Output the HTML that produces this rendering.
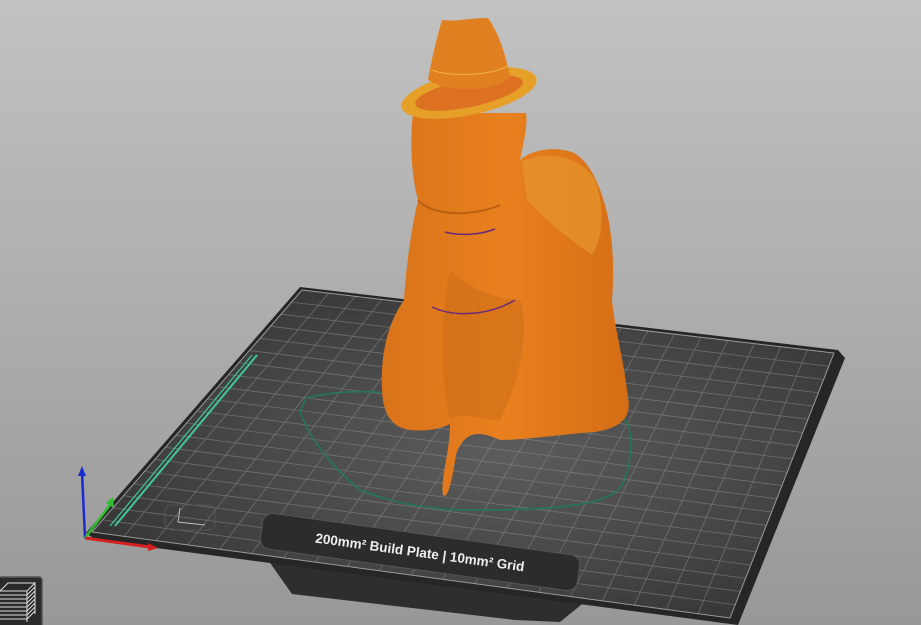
<!DOCTYPE html>
<html><head><meta charset="utf-8"><style>
html,body{margin:0;padding:0;width:921px;height:625px;overflow:hidden;background:#a9a9a9}
svg{display:block}
</style></head><body>
<svg id="s" width="921" height="625" viewBox="0 0 921 625" xmlns="http://www.w3.org/2000/svg">
<defs>
<linearGradient id="bg" x1="0" y1="0" x2="0" y2="1">
<stop offset="0" stop-color="#c2c2c2"/><stop offset="0.5" stop-color="#adadad"/><stop offset="1" stop-color="#989898"/></linearGradient>
<radialGradient id="pl" cx="0.55" cy="0.5" r="0.6">
<stop offset="0" stop-color="#5c5c5c"/><stop offset="0.6" stop-color="#464646"/><stop offset="1" stop-color="#363636"/></radialGradient>
<linearGradient id="or" x1="0" y1="0" x2="1" y2="0">
<stop offset="0" stop-color="#d9731a"/><stop offset="0.5" stop-color="#e8801f"/><stop offset="1" stop-color="#d56d16"/></linearGradient>
</defs>
<rect width="921" height="625" fill="url(#bg)"/>
<polygon points="268,560 592,596 560,622 515,620 292,594" fill="#2e2e2e"/>
<polygon points="300,287 838,350 845,358 738,625 96,540 86,533" fill="#262626"/>
<polygon points="302,290 834,353 730,618 92,532" fill="url(#pl)"/>
<g id="grid" stroke="#8c8c8c" stroke-width="0.8" opacity="0.6"></g>
<polygon points="302,290 834,353 730,618 92,532" fill="none" stroke="#9a9a9a" stroke-width="1"/>
<line x1="257" y1="355" x2="115" y2="526" stroke="#3fc79a" stroke-width="2"/>
<line x1="252" y1="355" x2="110" y2="526" stroke="#3fc79a" stroke-width="1.2"/>
<path d="M306,398 C330,392 360,390 385,393 L625,420 C635,430 632,470 620,488 C605,505 560,510 470,510 C420,510 385,500 360,490 C335,470 310,440 300,412 Z" fill="none" stroke="#1f7a5a" stroke-width="1.5"/>
<g transform="translate(420,552) rotate(7.9)">
<rect x="-160" y="-18" width="320" height="36" rx="10" fill="#2c2c2c" stroke="#555" stroke-width="1"/>
<text x="0" y="5" text-anchor="middle" font-family="Liberation Sans, sans-serif" font-weight="bold" font-size="13.5" fill="#eee">200mm² Build Plate  |  10mm² Grid</text>
</g>
<path d="M180,508 L178,522 L205,525" stroke="#bbb" stroke-width="1" fill="none"/>
<rect x="165" y="505" width="50" height="25" rx="7" fill="none" stroke="#555"/>
<line x1="85" y1="538" x2="82" y2="472" stroke="#1a2bd0" stroke-width="2.5"/>
<polygon points="78,476 86,476 82,466" fill="#1a2bd0"/>
<line x1="85" y1="538" x2="110" y2="505" stroke="#2fbf2f" stroke-width="2.5"/>
<polygon points="106,503 114,508 113,497" fill="#2fbf2f"/>
<line x1="85" y1="538" x2="150" y2="547" stroke="#d42020" stroke-width="3"/>
<polygon points="148,543 148,551 158,548" fill="#d42020"/>
<path d="M418,200 C410,235 406,270 404,300 C390,320 380,350 382,390 C383,418 395,428 410,430 C428,432 442,428 450,424 C450,452 440,480 443,495 C448,500 452,480 456,455 C465,428 482,432 500,440 C525,440 565,434 595,432 C620,428 632,418 628,398 C624,360 615,330 612,300 C615,265 612,230 605,205 C598,180 588,160 572,152 C552,146 532,150 520,160 C524,140 528,125 526,113 L413,113 C410,140 411,175 418,200 Z" fill="url(#or)"/>
<path d="M522,162 C545,150 580,155 595,180 C606,210 602,240 592,255 C570,240 545,220 527,200 Z" fill="#e6952e" opacity="0.7"/>
<path d="M450,270 C470,290 500,300 520,300 C530,330 520,380 500,420 C480,420 460,410 450,420 C440,380 440,320 450,270 Z" fill="#c96a16" opacity="0.5"/>
<path d="M418,200 C430,215 470,218 500,205" stroke="#b85f10" stroke-width="2" fill="none"/>
<path d="M445,232 C460,236 480,235 495,229" stroke="#6a2a7a" stroke-width="1.5" fill="none"/>
<path d="M432,307 C455,318 490,315 515,300" stroke="#6a2a7a" stroke-width="1.5" fill="none"/>
<ellipse cx="469" cy="93" rx="69" ry="22" transform="rotate(-12 469 93)" fill="#e6a028"/>
<ellipse cx="469" cy="93" rx="55" ry="14" transform="rotate(-12 469 93)" fill="#d24a1c" opacity="0.55"/>
<path d="M428,80 C432,57 437,37 442,20 C455,22 470,18 488,18 C500,35 506,57 510,77 C500,90 450,95 428,80 Z" fill="#e08020"/>
<path d="M431,70 C455,78 490,75 508,66" stroke="#f0b040" stroke-width="1" fill="none"/>
<rect x="-2" y="577" width="44" height="52" rx="3" fill="#2a2a2a" stroke="#555" stroke-width="1.5"/>
<g stroke="#ddd" stroke-width="1" fill="none">
<path d="M0,591 L8,583 L35,583 L27,591 Z"/>
<path d="M0,595H27L35,587M0,599H27L35,591M0,603H27L35,595M0,607H27L35,599M0,611H27L35,603M0,615H27L35,607M0,619H27L35,611"/>
<path d="M27,591V622 M35,583V614"/>
</g>
</svg>
<script>
(function(){
var TL=[302,290],TR=[834,353],BR=[730,618],BL=[92,532];
function L(a,b,t){return [a[0]+(b[0]-a[0])*t,a[1]+(b[1]-a[1])*t];}
var g=document.getElementById('grid'),n=20,h='';
for(var i=1;i<n;i++){var t=i/n;
var p=L(TL,TR,t),q=L(BL,BR,t);h+='<line x1="'+p[0]+'" y1="'+p[1]+'" x2="'+q[0]+'" y2="'+q[1]+'"/>';
var r=L(TL,BL,t),s=L(TR,BR,t);h+='<line x1="'+r[0]+'" y1="'+r[1]+'" x2="'+s[0]+'" y2="'+s[1]+'"/>';}
g.innerHTML=h;
})();
</script>
</body></html>
